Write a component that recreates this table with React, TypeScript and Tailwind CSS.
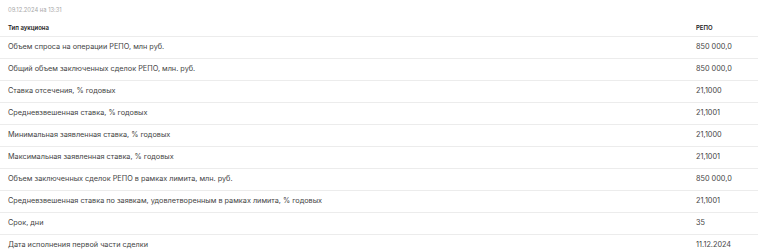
const rows: [string, string][] = [
  ["Объем спроса на операции РЕПО, млн руб.", "850 000,0"],
  ["Общий объем заключенных сделок РЕПО, млн. руб.", "850 000,0"],
  ["Ставка отсечения, % годовых", "21,1000"],
  ["Средневзвешенная ставка, % годовых", "21,1001"],
  ["Минимальная заявленная ставка, % годовых", "21,1000"],
  ["Максимальная заявленная ставка, % годовых", "21,1001"],
  ["Объем заключенных сделок РЕПО в рамках лимита, млн. руб.", "850 000,0"],
  ["Средневзвешенная ставка по заявкам, удовлетворенным в рамках лимита, % годовых", "21,1001"],
  ["Срок, дни", "35"],
  ["Дата исполнения первой части сделки", "11.12.2024"],
];

export default function App() {
  return (
    <div className="w-[758px] h-[252px] overflow-hidden bg-white font-['Inter',sans-serif]">
      <div className="h-[19px] pl-2 pt-[6px] text-[5.8px] leading-[7px] text-[#a8a8a8]">
        09.12.2024 на 13:31
      </div>
      <div className="grid grid-cols-[1fr_62px] h-[18px] items-center border-b border-[#ececec] text-[6px] font-semibold text-[#222]">
        <span className="pl-2">Тип аукциона</span>
        <span>РЕПО</span>
      </div>
      {rows.map(([label, value]) => (
        <div
          key={label}
          className="grid grid-cols-[1fr_62px] h-[22px] items-center border-b border-[#ececec] text-[7.3px] text-[#444]"
        >
          <span className="pl-2">{label}</span>
          <span>{value}</span>
        </div>
      ))}
    </div>
  );
}
